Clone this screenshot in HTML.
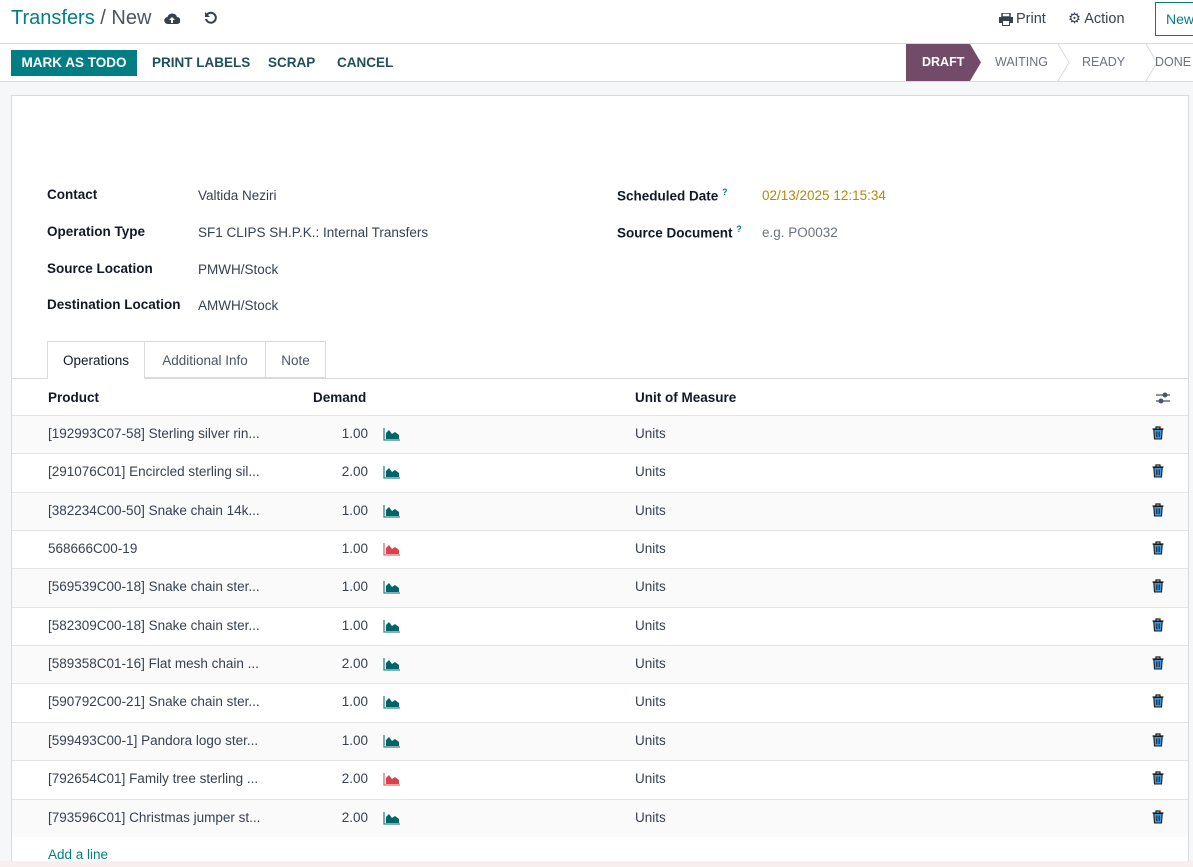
<!DOCTYPE html>
<html><head><meta charset="utf-8"><style>
*{box-sizing:border-box;margin:0;padding:0}
body{width:1193px;height:867px;overflow:hidden;background:#f6f7f9;font-family:"Liberation Sans",sans-serif;font-size:13px;color:#374151;position:relative}
.top{position:absolute;left:0;top:0;width:1193px;height:44px;background:#fff;border-bottom:1px solid #d8dadd}
.bc{position:absolute;left:11px;top:7px;font-size:20px;color:#017e84}
.bc span{color:#4b5563}
.btnbar{position:absolute;left:0;top:44px;width:1193px;height:38px;background:#fff;border-bottom:1px solid #d8dadd}
.b{position:absolute;top:6px;height:26px;line-height:26px;font-weight:bold;font-size:13.5px;color:#1f4f57}
.todo{left:11px;width:126px;background:#017e84;color:#fff;text-align:center}
.st{position:absolute;top:0;height:37px;line-height:37px;font-size:12.5px;color:#6b7280}
.sheet{position:absolute;left:11px;top:95px;width:1178px;height:772px;background:#fff;border:1px solid #d8dadd}
.lbl{position:absolute;font-weight:bold;color:#111827;font-size:13.5px}
.val{position:absolute;font-size:13.5px;color:#374151}
sup{color:#017e84;font-size:9px}
.tabs{position:absolute;left:35px;top:245px}
.tab{position:absolute;top:0;height:38px;line-height:37px;border:1px solid #d8dadd;text-align:center;font-size:13.5px;color:#4b5563;background:#fff}
.row{position:absolute;left:0;width:1176px;border-top:1px solid #e2e4e7;height:38.4px;font-size:13.5px}
.row div{position:absolute;top:10px}
.odd{background:#fafafa}
</style></head><body>
<div class="top">
<div class="bc">Transfers <span>/ New</span></div>
<svg style="position:absolute;left:164px;top:12px" width="16" height="13" viewBox="0 0 16 13"><path d="M4 12a3.5 3.5 0 0 1-.5-7A5 5 0 0 1 13 5a3.5 3.5 0 0 1 0 7z" fill="#374151"/><path d="M8 5l-3 3h2v3h2V8h2z" fill="#fff"/></svg>
<svg style="position:absolute;left:204px;top:11px" width="14" height="14" viewBox="0 0 14 14"><path d="M3 3.5A5 5 0 1 1 2 8" fill="none" stroke="#374151" stroke-width="2"/><path d="M1 1v5h5z" fill="#374151"/></svg>
<svg style="position:absolute;left:999px;top:13px" width="14" height="13" viewBox="0 0 14 13"><path d="M3 0h8v4H3z" fill="none" stroke="#374151" stroke-width="1.5"/><path d="M0 4h14v6h-3v3H3v-3H0z" fill="#374151"/><path d="M4 8h6v4H4z" fill="#fff"/></svg>
<div style="position:absolute;left:1016px;top:11px;font-size:14.5px;color:#374151">Print</div>
<div style="position:absolute;left:1068px;top:11px;font-size:14.5px;color:#374151">⚙ Action</div>
<div style="position:absolute;left:1155px;top:2px;width:50px;height:34px;border:1px solid #017e84;color:#017e84;font-size:14px;line-height:32px;padding-left:10px">New</div>
</div>
<div class="btnbar">
<div class="b todo">MARK AS TODO</div>
<div class="b" style="left:152px">PRINT LABELS</div>
<div class="b" style="left:268px">SCRAP</div>
<div class="b" style="left:337px">CANCEL</div>
<svg style="position:absolute;left:906px;top:0" width="287" height="37"><polygon points="0,0 64,0 75,18.5 64,37 0,37" fill="#714b67"/><polyline points="152,0 163,18.5 152,37" fill="none" stroke="#d8dadd"/><polyline points="240,0 251,18.5 240,37" fill="none" stroke="#d8dadd"/></svg>
<div class="st" style="left:922px;color:#fff;font-weight:bold">DRAFT</div>
<div class="st" style="left:995px">WAITING</div>
<div class="st" style="left:1082px">READY</div>
<div class="st" style="left:1155px">DONE</div>
</div>
<div class="sheet">
<div class="lbl" style="left:35px;top:91px">Contact</div><div class="val" style="left:186px;top:92px">Valtida Neziri</div>
<div class="lbl" style="left:35px;top:128px">Operation Type</div><div class="val" style="left:186px;top:129px">SF1 CLIPS SH.P.K.: Internal Transfers</div>
<div class="lbl" style="left:35px;top:165px">Source Location</div><div class="val" style="left:186px;top:166px">PMWH/Stock</div>
<div class="lbl" style="left:35px;top:201px">Destination Location</div><div class="val" style="left:186px;top:202px">AMWH/Stock</div>
<div class="lbl" style="left:605px;top:91px">Scheduled Date <sup>?</sup></div><div class="val" style="left:750px;top:92px;color:#b8860b">02/13/2025 12:15:34</div>
<div class="lbl" style="left:605px;top:128px">Source Document <sup>?</sup></div><div class="val" style="left:750px;top:129px;color:#6b7280">e.g. PO0032</div>
<div style="position:absolute;left:0;top:282px;width:1176px;border-top:1px solid #d8dadd"></div>
<div class="tabs">
<div class="tab" style="left:0;width:98px;color:#111827;border-bottom-color:#fff">Operations</div>
<div class="tab" style="left:97px;width:122px;height:37px">Additional Info</div>
<div class="tab" style="left:218px;width:61px;height:37px">Note</div>
</div>
<div class="lbl" style="left:36px;top:294px">Product</div>
<div class="lbl" style="left:301px;top:294px">Demand</div>
<div class="lbl" style="left:623px;top:294px">Unit of Measure</div>
<svg style="position:absolute;left:1143px;top:295px" width="16" height="14"><path d="M1 4h14M1 10h14" stroke="#4b5563" stroke-width="1.3"/><circle cx="10" cy="4" r="2.5" fill="#4b5563"/><circle cx="6" cy="10" r="2.5" fill="#4b5563"/></svg>
<div id="rows"></div>
<div style="position:absolute;left:36px;top:751px;color:#017e84;font-size:13.5px">Add a line</div>
</div>
<div style="position:absolute;left:0;top:861px;width:1193px;height:6px;background:#f8eeee"></div>
<script>
var d=[["[192993C07-58] Sterling silver rin...","1.00",0],["[291076C01] Encircled sterling sil...","2.00",0],["[382234C00-50] Snake chain 14k...","1.00",0],["568666C00-19","1.00",1],["[569539C00-18] Snake chain ster...","1.00",0],["[582309C00-18] Snake chain ster...","1.00",0],["[589358C01-16] Flat mesh chain ...","2.00",0],["[590792C00-21] Snake chain ster...","1.00",0],["[599493C00-1] Pandora logo ster...","1.00",0],["[792654C01] Family tree sterling ...","2.00",1],["[793596C01] Christmas jumper st...","2.00",0]];
var h="";d.forEach(function(r,i){var c=r[2]?"#d9434b":"#00646a";var t=319+i*38.35;
h+='<div class="row'+(i%2==0?' odd':'')+'" style="top:'+t+'px"><div style="left:36px">'+r[0]+'</div><div style="left:320px;width:36px;text-align:right">'+r[1]+'</div><div style="left:371px;top:12px"><svg width="17" height="13"><path d="M1 0v12h16" stroke="'+c+'" stroke-width="1.3" fill="none" opacity=".8"/><path d="M3 11V5l3-3 3 4 3-2 4 3v4z" fill="'+c+'"/></svg></div><div style="left:623px">Units</div><div style="left:1140px;top:10px"><svg width="12" height="14" viewBox="0 0 12 14"><path d="M0.5 3h11M4 3V1h4v2" stroke="#1a1a1a" stroke-width="1.2" fill="none"/><path d="M1.8 3.5l.7 9.5h7l.7-9.5z" stroke="#1a1a1a" stroke-width="1.1" fill="#3b9ae8"/><path d="M4.5 5.5v5.5M6 5.5v5.5M7.5 5.5v5.5" stroke="#1a1a1a" stroke-width=".7"/></svg></div></div>';});
document.getElementById("rows").innerHTML=h;
</script>
</body></html>
